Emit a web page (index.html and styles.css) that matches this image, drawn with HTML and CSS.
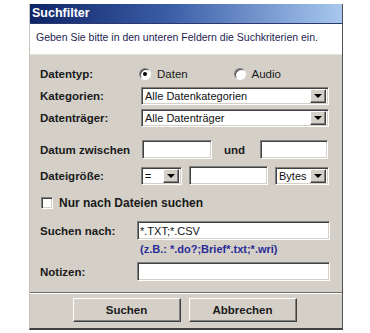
FILE: index.html
```html
<!DOCTYPE html>
<html lang="de">
  <head>
    <meta charset="UTF-8" />
    <title>Suchfilter</title>
    <link rel="stylesheet" href="styles.css">
  </head>
  <body>
    <div class="window">
      <div class="titlebar">Suchfilter</div>
      <div class="banner">Geben Sie bitte in den unteren Feldern die Suchkriterien ein.</div>

      <div class="form">
        <div class="row row-type">
          <span class="label">Datentyp:</span>
          <label class="radio"><span class="radio-dot checked"></span>Daten</label>
          <label class="radio"><span class="radio-dot"></span>Audio</label>
        </div>

        <div class="row row-cat">
          <span class="label">Kategorien:</span>
          <div class="combo combo-full">
            <span class="combo-text">Alle Datenkategorien</span>
            <span class="combo-btn"><i class="arrow"></i></span>
          </div>
        </div>

        <div class="row row-drive">
          <span class="label">Datenträger:</span>
          <div class="combo combo-full">
            <span class="combo-text">Alle Datenträger</span>
            <span class="combo-btn"><i class="arrow"></i></span>
          </div>
        </div>

        <div class="row row-date">
          <span class="label">Datum zwischen</span>
          <input class="field field-date" type="text" />
          <span class="label label-und">und</span>
          <input class="field field-date2" type="text" />
        </div>

        <div class="row row-size">
          <span class="label">Dateigröße:</span>
          <div class="combo combo-op">
            <span class="combo-text">=</span>
            <span class="combo-btn"><i class="arrow"></i></span>
          </div>
          <input class="field field-size" type="text" />
          <div class="combo combo-unit">
            <span class="combo-text">Bytes</span>
            <span class="combo-btn"><i class="arrow"></i></span>
          </div>
        </div>

        <div class="row row-check">
          <span class="checkbox"></span>
          <span class="check-label">Nur nach Dateien suchen</span>
        </div>

        <div class="row row-search row-wide">
          <span class="label">Suchen nach:</span>
          <input class="field field-wide" type="text" value="*.TXT;*.CSV" />
        </div>

        <div class="row row-hint row-wide">
          <span class="label"></span>
          <span class="hint">(z.B.: *.do?;Brief*.txt;*.wri)</span>
        </div>

        <div class="row row-notes row-wide">
          <span class="label">Notizen:</span>
          <input class="field field-wide" type="text" />
        </div>
      </div>

      <div class="separator"></div>

      <div class="buttons">
        <button class="button">Suchen</button>
        <button class="button">Abbrechen</button>
      </div>
    </div>
  </body>
</html>
```

FILE: styles.css
```css
body {
    margin: 0;
    background-color: #fff;
    font-family: 'Liberation Sans', Arial, sans-serif;
}

.window {
    width: 312px;
    margin: 4px 0 0 29px;
    background-color: #d4d0c8;
    border-left: 1px solid #c8c4bc;
    border-right: 1px solid #505050;
    border-bottom: 2px solid #404040;
    padding-bottom: 6px;
}

.titlebar {
    height: 19px;
    line-height: 19px;
    padding-left: 2px;
    color: #fff;
    font-size: 12.5px;
    font-weight: bold;
    background: linear-gradient(to right, #0e2466 0%, #3c5ea8 45%, #a8c8ee 100%);
}

.banner {
    height: 30px;
    line-height: 27px;
    padding-left: 6px;
    background-color: #fff;
    color: #1c2450;
    font-size: 10.5px;
    border-bottom: 1px solid #e4e2dc;
    border-top: 1px solid #2a3a70;
}

.form {
    padding: 10px 12px 0 10px;
}

.row {
    display: flex;
    align-items: center;
    height: 18px;
}

.label {
    width: 101px;
    flex-shrink: 0;
    font-size: 11.5px;
    font-weight: bold;
    color: #1a1a1a;
}

.row-wide .label {
    width: 97px;
}

.row-cat { margin-top: 4px; }
.row-drive { margin-top: 4px; }
.row-date { margin-top: 13px; height: 19px; }
.row-size { margin-top: 7px; height: 19px; }
.row-check { margin-top: 9px; }
.row-search { margin-top: 9px; height: 19px; }
.row-hint { margin-top: 1px; height: 16px; }
.row-notes { margin-top: 5px; height: 19px; }

/* radio buttons */
.radio {
    display: flex;
    align-items: center;
    width: 104px;
    font-size: 11.5px;
    color: #1a1a1a;
}

.radio-dot {
    position: relative;
    width: 10px;
    height: 10px;
    margin: 0 6px 0 -2px;
    border-radius: 50%;
    background-color: #fff;
    border: 1px solid #808080;
    border-right-color: #fff;
    border-bottom-color: #fff;
    box-shadow: inset 1px 1px 0 #404040;
}

.radio-dot.checked::after {
    content: '';
    position: absolute;
    left: 3px;
    top: 3px;
    width: 4px;
    height: 4px;
    border-radius: 50%;
    background-color: #000;
}

/* combo boxes and text fields */
.combo, .field {
    box-sizing: border-box;
    height: 18px;
    background-color: #fff;
    border: 1px solid #808080;
    border-right-color: #fff;
    border-bottom-color: #fff;
    box-shadow: inset 1px 1px 0 #404040, inset -1px -1px 0 #d4d0c8;
}

.combo {
    display: flex;
    align-items: center;
    padding: 2px;
}

.combo-text {
    flex: 1;
    font-size: 11px;
    color: #111;
    padding-left: 1px;
    white-space: nowrap;
    overflow: hidden;
}

.combo-btn {
    display: flex;
    align-items: center;
    justify-content: center;
    box-sizing: border-box;
    width: 16px;
    height: 14px;
    background-color: #d4d0c8;
    border: 1px solid #fff;
    border-right-color: #404040;
    border-bottom-color: #404040;
    box-shadow: inset -1px -1px 0 #808080;
}

.arrow {
    width: 0;
    height: 0;
    border-left: 4px solid transparent;
    border-right: 4px solid transparent;
    border-top: 4px solid #000;
}

.combo-full { width: 188px; }
.combo-op { width: 41px; }
.combo-unit { width: 54px; margin-left: 7px; }

.field {
    padding: 0 2px;
    font-family: 'Liberation Sans', Arial, sans-serif;
    font-size: 11px;
    color: #111;
    outline: none;
}

.field-date { width: 70px; height: 19px; margin-left: 1px; }
.label-und { width: auto; margin-left: 12px; margin-right: 15px; }
.field-date2 { width: 68px; height: 19px; }
.field-size { width: 79px; height: 19px; margin-left: 7px; }
.field-wide { width: 194px; height: 19px; }

/* checkbox */
.checkbox {
    box-sizing: border-box;
    width: 12px;
    height: 12px;
    margin-left: 1px;
    background-color: #fff;
    border: 1px solid #808080;
    border-right-color: #fff;
    border-bottom-color: #fff;
    box-shadow: inset 1px 1px 0 #404040, inset -1px -1px 0 #d4d0c8;
}

.check-label {
    margin-left: 6px;
    font-size: 12px;
    font-weight: bold;
    color: #1a1a1a;
}

.hint {
    padding-left: 3px;
    font-size: 11px;
    font-weight: bold;
    color: #2a2c96;
}

.separator {
    margin-top: 11px;
    border-top: 1px solid #6c6c6c;
    border-bottom: 1px solid #fff;
}

.buttons {
    display: flex;
    justify-content: center;
    gap: 8px;
    margin-top: 4px;
    padding-right: 3px;
}

.button {
    width: 108px;
    height: 24px;
    padding: 0;
    font-family: 'Liberation Sans', Arial, sans-serif;
    font-size: 11.5px;
    font-weight: bold;
    color: #1a1a1a;
    background-color: #d4d0c8;
    border: 1px solid #fff;
    border-right-color: #404040;
    border-bottom-color: #404040;
    box-shadow: inset -1px -1px 0 #808080;
}
```
